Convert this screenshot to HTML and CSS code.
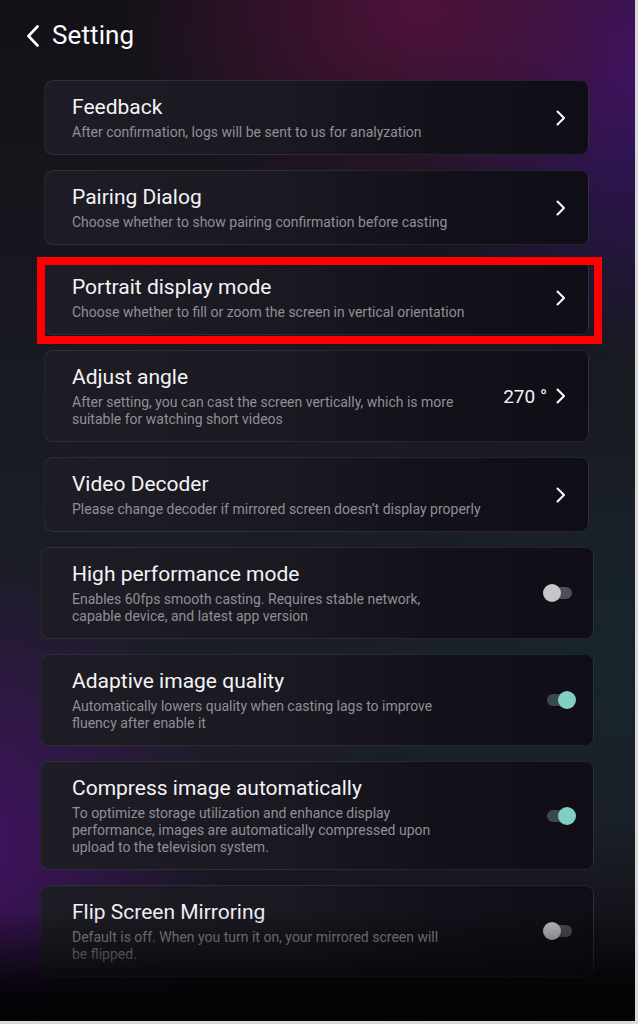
FILE: index.html
```html
<!DOCTYPE html>
<html lang="en">
<head>
<meta charset="utf-8">
<title>Setting</title>
<link rel="stylesheet" href="styles.css">
</head>
<body>
<div class="screen">
  <header class="header">
    <svg class="back" width="14" height="22" viewBox="0 0 14 22"><path d="M11.5 1.5 L2.5 11 L11.5 20.5" fill="none" stroke="#fff" stroke-width="2.6" stroke-linecap="round" stroke-linejoin="round"/></svg>
    <h1 class="title">Setting</h1>
  </header>

  <main class="list">
    <div class="card link">
      <div class="text">
        <div class="name">Feedback</div>
        <div class="desc">After confirmation, logs will be sent to us for analyzation</div>
      </div>
      <svg class="chev" width="12" height="16" viewBox="0 0 12 16"><path d="M2.5 1.5 L9 8 L2.5 14.5" fill="none" stroke="#fff" stroke-width="2" stroke-linecap="round" stroke-linejoin="round"/></svg>
    </div>

    <div class="card link">
      <div class="text">
        <div class="name">Pairing Dialog</div>
        <div class="desc">Choose whether to show pairing confirmation before casting</div>
      </div>
      <svg class="chev" width="12" height="16" viewBox="0 0 12 16"><path d="M2.5 1.5 L9 8 L2.5 14.5" fill="none" stroke="#fff" stroke-width="2" stroke-linecap="round" stroke-linejoin="round"/></svg>
    </div>

    <div class="card link marked">
      <div class="text">
        <div class="name">Portrait display mode</div>
        <div class="desc">Choose whether to fill or zoom the screen in vertical orientation</div>
      </div>
      <svg class="chev" width="12" height="16" viewBox="0 0 12 16"><path d="M2.5 1.5 L9 8 L2.5 14.5" fill="none" stroke="#fff" stroke-width="2" stroke-linecap="round" stroke-linejoin="round"/></svg>
    </div>

    <div class="card link">
      <div class="text narrow-value">
        <div class="name">Adjust angle</div>
        <div class="desc">After setting, you can cast the screen vertically, which is more suitable for watching short videos</div>
      </div>
      <div class="value">270 °</div>
      <svg class="chev" width="12" height="16" viewBox="0 0 12 16"><path d="M2.5 1.5 L9 8 L2.5 14.5" fill="none" stroke="#fff" stroke-width="2" stroke-linecap="round" stroke-linejoin="round"/></svg>
    </div>

    <div class="card link">
      <div class="text">
        <div class="name">Video Decoder</div>
        <div class="desc">Please change decoder if mirrored screen doesn’t display properly</div>
      </div>
      <svg class="chev" width="12" height="16" viewBox="0 0 12 16"><path d="M2.5 1.5 L9 8 L2.5 14.5" fill="none" stroke="#fff" stroke-width="2" stroke-linecap="round" stroke-linejoin="round"/></svg>
    </div>

    <div class="card switch">
      <div class="text narrow">
        <div class="name">High performance mode</div>
        <div class="desc">Enables 60fps smooth casting. Requires stable network, capable device, and latest app version</div>
      </div>
      <div class="toggle"><span class="track"></span><span class="knob"></span></div>
    </div>

    <div class="card switch">
      <div class="text narrow">
        <div class="name">Adaptive image quality</div>
        <div class="desc">Automatically lowers quality when casting lags to improve fluency after enable it</div>
      </div>
      <div class="toggle on"><span class="track"></span><span class="knob"></span></div>
    </div>

    <div class="card switch">
      <div class="text narrow">
        <div class="name">Compress image automatically</div>
        <div class="desc">To optimize storage utilization and enhance display performance, images are automatically compressed upon upload to the television system.</div>
      </div>
      <div class="toggle on"><span class="track"></span><span class="knob"></span></div>
    </div>

    <div class="card switch">
      <div class="text narrow">
        <div class="name">Flip Screen Mirroring</div>
        <div class="desc">Default is off. When you turn it on, your mirrored screen will be flipped.</div>
      </div>
      <div class="toggle"><span class="track"></span><span class="knob"></span></div>
    </div>

    <div class="card link empty"></div>
  </main>

  <div class="fade"></div>
</div>
</body>
</html>
```

FILE: styles.css
```css
* { box-sizing: border-box; }

html, body {
  margin: 0;
  padding: 0;
  background: #d9d9dc;
}

body {
  font-family: Roboto, "Noto Sans", "Liberation Sans", sans-serif;
  color: #f2f2f4;
}

.screen {
  position: relative;
  width: 635px;
  height: 1021px;
  overflow: hidden;
  background:
    radial-gradient(ellipse 300px 210px at 420px 10px, rgba(82, 18, 60, 0.95) 0%, rgba(82, 18, 60, 0) 100%),
    radial-gradient(ellipse 250px 300px at 640px 60px, rgba(60, 20, 112, 0.95) 0%, rgba(60, 20, 112, 0) 100%),
    radial-gradient(ellipse 260px 300px at -30px 850px, rgba(66, 18, 98, 1) 0%, rgba(66, 18, 98, 0) 100%),
    radial-gradient(ellipse 300px 220px at 600px 660px, rgba(22, 40, 46, 0.7) 0%, rgba(22, 40, 46, 0) 100%),
    linear-gradient(180deg, #131117 0%, #171820 30%, #1a1d25 50%, #1b1e26 80%, #121219 92%, #050507 100%);
}

.header {
  display: flex;
  align-items: center;
  gap: 12px;
  height: 70px;
  padding: 0 0 0 26px;
}

.back { display: block; margin-top: 1px; }

.title {
  margin: 0;
  font-size: 26px;
  font-weight: 400;
  letter-spacing: 0.1px;
  color: #fbfbfc;
}

.list {
  display: flex;
  flex-direction: column;
  gap: 15px;
  padding-top: 10px;
}

.card {
  position: relative;
  display: flex;
  align-items: center;
  border: 1px solid rgba(255, 255, 255, 0.09);
  border-radius: 9px;
  background: linear-gradient(90deg, #1e1c24 0%, #1a1820 45%, #131119 70%, #0f0d15 100%);
  padding: 13px 21px 13px 27px;
}

.card.link {
  margin-left: 44px;
  width: 545px;
}

.card.switch {
  margin-left: 40px;
  width: 554px;
  padding-left: 31px;
  padding-right: 17px;
}

.text {
  flex: 1;
  min-width: 0;
}

.text.narrow { flex: 0 0 376px; margin-right: auto; }
.text.narrow-value { flex: 0 0 400px; margin-right: auto; }

.name {
  font-size: 21px;
  line-height: 26px;
  color: #f4f4f6;
}

.desc {
  margin-top: 4px;
  font-size: 14px;
  line-height: 17px;
  color: #918f97;
}

.chev { display: block; flex: none; margin-left: 8px; }

.value {
  flex: none;
  font-size: 19px;
  color: #f4f4f6;
  margin-left: 8px;
}

.toggle {
  position: relative;
  flex: none;
  width: 33px;
  height: 18px;
}

.toggle .track {
  position: absolute;
  left: 4px;
  right: 4px;
  top: 3px;
  height: 12px;
  border-radius: 6px;
  background: #4f4d55;
}

.toggle .knob {
  position: absolute;
  left: 0;
  top: 0;
  width: 18px;
  height: 18px;
  border-radius: 50%;
  background: #c6c5ca;
}

.toggle.on .track { background: #3a4a4c; }
.toggle.on .knob { left: auto; right: 0; background: #7fd0c3; }

.marked::after {
  content: "";
  position: absolute;
  left: -8px;
  top: -4px;
  right: -14px;
  bottom: -10px;
  border: 8px solid #ff0000;
  pointer-events: none;
}

.card.empty { height: 60px; }

.fade {
  position: absolute;
  left: 0;
  right: 0;
  bottom: 0;
  height: 110px;
  background: linear-gradient(180deg, rgba(5, 5, 8, 0) 0%, rgba(5, 5, 8, 0.55) 45%, rgba(4, 4, 6, 0.95) 75%, #040406 100%);
  pointer-events: none;
}
```
